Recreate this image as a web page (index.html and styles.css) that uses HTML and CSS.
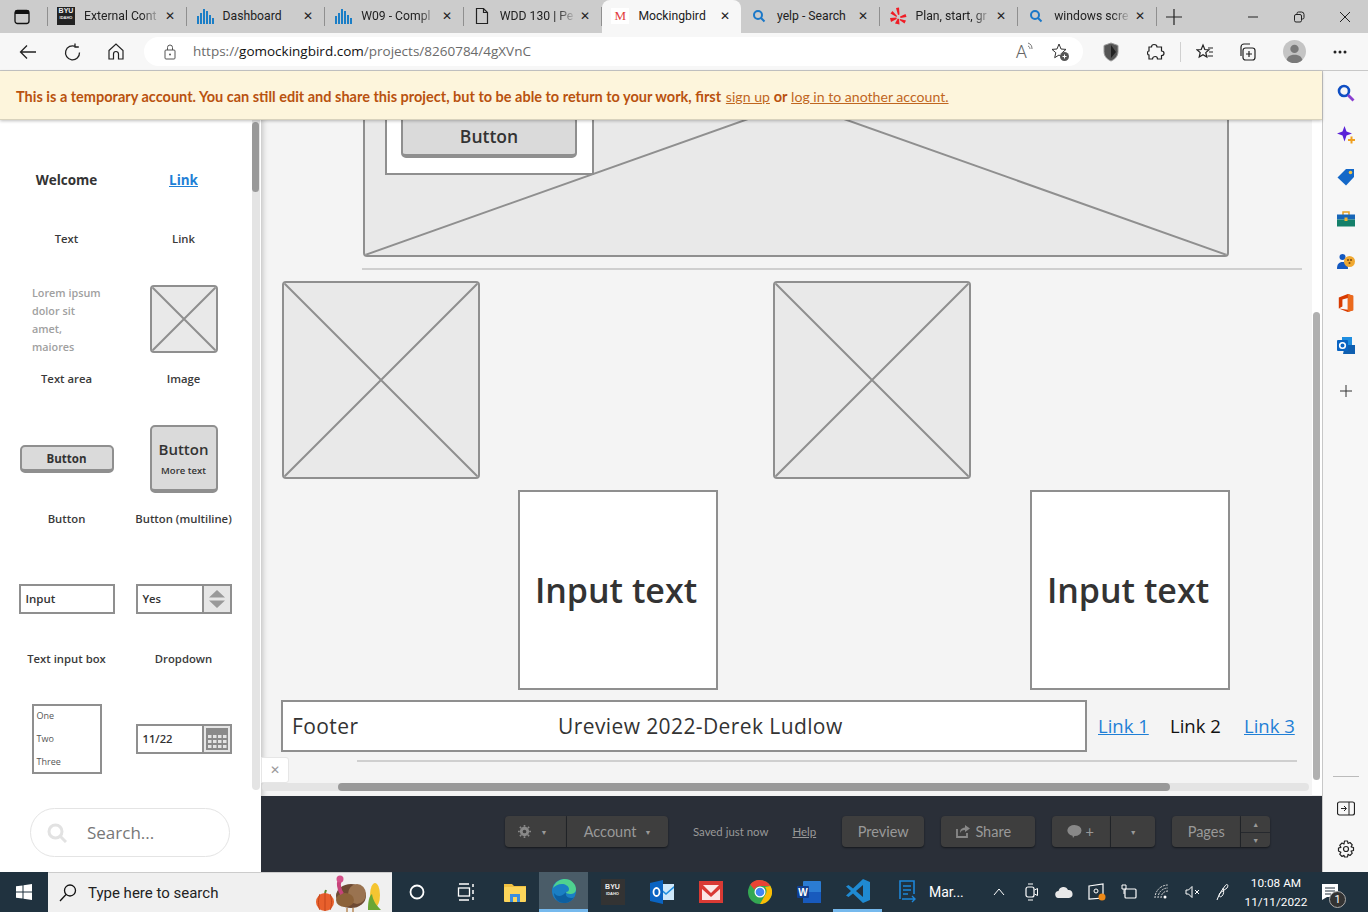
FILE: index.html
```html
<!DOCTYPE html>
<html lang="en">
<head>
    <meta charset="UTF-8">
    <title>Mockingbird</title>
    <link rel="stylesheet" href="styles.css">
</head>
<body>
    <!-- browser tabs -->
    <div class="tabstrip">
        <div class="tab-menu">
            <svg width="16" height="16" viewBox="0 0 16 16"><rect x="1" y="1.500" width="14" height="13" rx="2.500" fill="none" stroke="#111" stroke-width="1.300"/><rect x="1" y="1.500" width="14" height="3.500" fill="#111"/></svg>
        </div>
        <div class="tab">
            <div class="byu"><span>BYU</span><small>IDAHO</small></div>
            <span class="tab-title">External Cont</span><span class="tab-x">✕</span>
        </div>
        <div class="tab">
            <svg class="fav" width="18" height="18" viewBox="0 0 18 18" fill="#1b7ec6"><rect x="1" y="9" width="2" height="8"/><rect x="4" y="6" width="2" height="11"/><rect x="7" y="2" width="2" height="15"/><rect x="10" y="4" width="2" height="13"/><rect x="13" y="8" width="2" height="9"/><rect x="16" y="11" width="2" height="6"/></svg>
            <span class="tab-title tab-plain">Dashboard</span><span class="tab-x">✕</span>
        </div>
        <div class="tab">
            <svg class="fav" width="18" height="18" viewBox="0 0 18 18" fill="#1b7ec6"><rect x="1" y="9" width="2" height="8"/><rect x="4" y="6" width="2" height="11"/><rect x="7" y="2" width="2" height="15"/><rect x="10" y="4" width="2" height="13"/><rect x="13" y="8" width="2" height="9"/><rect x="16" y="11" width="2" height="6"/></svg>
            <span class="tab-title">W09 - Compl</span><span class="tab-x">✕</span>
        </div>
        <div class="tab">
            <svg class="fav" width="18" height="18" viewBox="0 0 18 18"><path d="M3.500 1.500h7l4 4v11h-11z M10.500 1.500v4h4" fill="none" stroke="#222" stroke-width="1.200"/></svg>
            <span class="tab-title">WDD 130 | Pe</span><span class="tab-x">✕</span>
        </div>
        <div class="tab active">
            <span class="fav fav-m">M</span>
            <span class="tab-title tab-plain">Mockingbird</span><span class="tab-x">✕</span>
        </div>
        <div class="tab">
            <svg class="fav" width="18" height="18" viewBox="0 0 18 18"><circle cx="8" cy="8" r="4" fill="none" stroke="#1b78c8" stroke-width="2"/><path d="M11 11l3.500 3.500" stroke="#1b78c8" stroke-width="2"/></svg>
            <span class="tab-title tab-plain">yelp - Search</span><span class="tab-x">✕</span>
        </div>
        <div class="tab">
            <svg class="fav" width="18" height="18" viewBox="0 0 18 18" fill="#f01c25"><path d="M7 1l3-.5.500 7-1.500.5z"/><path d="M1.500 6.500l2-2.500 4.500 5-.5 1z"/><path d="M1 11l6.500-.5.200 1.500-5.700 3z"/><path d="M6 16.500l2.800-5 1.200.5.500 5.500z"/><path d="M11 9.500l5.500-2.500 1 3-6 1z"/><path d="M11 12l6 1.500-1.500 3-5-3.500z"/></svg>
            <span class="tab-title">Plan, start, gr</span><span class="tab-x">✕</span>
        </div>
        <div class="tab">
            <svg class="fav" width="18" height="18" viewBox="0 0 18 18"><circle cx="8" cy="8" r="4" fill="none" stroke="#1b78c8" stroke-width="2"/><path d="M11 11l3.500 3.500" stroke="#1b78c8" stroke-width="2"/></svg>
            <span class="tab-title">windows scre</span><span class="tab-x">✕</span>
        </div>
        <div class="tab-add">
            <svg width="16" height="16" viewBox="0 0 16 16"><path d="M8 0v16M0 8h16" stroke="#222" stroke-width="1.200"/></svg>
        </div>
        <div class="win-controls">
            <svg width="12" height="12" viewBox="0 0 12 12"><path d="M1 6h10" stroke="#222"/></svg>
            <svg width="12" height="12" viewBox="0 0 12 12"><rect x="1.500" y="3.500" width="7" height="7.500" rx="1.500" fill="none" stroke="#222"/><path d="M4 3.500V2.500a1.500 1.500 0 0 1 1.500-1.500h3a2.500 2.500 0 0 1 2.500 2.500v3a1.500 1.500 0 0 1-1.500 1.500h-1" fill="none" stroke="#222"/></svg>
            <svg width="12" height="12" viewBox="0 0 12 12"><path d="M1 1l10 10M11 1L1 11" stroke="#222"/></svg>
        </div>
    </div>

    <!-- address bar -->
    <div class="toolbar">
        <div class="nav-btn"><svg width="18" height="16" viewBox="0 0 18 16"><path d="M17 8H1.500M8 1.500L1.500 8 8 14.500" fill="none" stroke="#222" stroke-width="1.300"/></svg></div>
        <div class="nav-btn"><svg width="17" height="18" viewBox="0 0 17 18"><path d="M11.500 3.500A7 7 0 1 0 15.500 9.500M11 .5v3.500h3.800" fill="none" stroke="#222" stroke-width="1.300"/></svg></div>
        <div class="nav-btn"><svg width="16" height="17" viewBox="0 0 16 17"><path d="M1 7.500L8 1l7 6.500v8.500h-4.500v-5a2.500 2.500 0 0 0-5 0v5H1z" fill="none" stroke="#222" stroke-width="1.200"/></svg></div>
        <div class="urlbar">
            <svg class="lock" width="12" height="16" viewBox="0 0 12 16"><rect x="1" y="6" width="10" height="9" rx="1" fill="none" stroke="#555"/><path d="M3.500 6V3.500a2.500 2.500 0 0 1 5 0V6" fill="none" stroke="#555"/><circle cx="6" cy="10.500" r="1" fill="#555"/></svg>
            <span class="url"><span class="url-dim">https://</span>gomockingbird.com<span class="url-dim">/projects/8260784/4gXVnC</span></span>
            <span class="read-a">A<svg width="7" height="10" viewBox="0 0 7 10"><path d="M1 1c3 1 4 3 4 6M1 4c1.500.5 2 2 2 3" fill="none" stroke="#777"/></svg></span>
            <svg width="20" height="20" viewBox="0 0 20 20"><path d="M9 2l2 5 5 .4-3.800 3.300 1.100 5L9 13l-4.300 2.700 1.100-5L2 7.400 7 7z" fill="none" stroke="#333"/><circle cx="14.500" cy="14.500" r="4.500" fill="#555"/><path d="M14.500 12.500v4M12.500 14.500h4" stroke="#fff"/></svg>
        </div>
        <div class="tool-icons">
            <svg width="16" height="20" viewBox="0 0 16 20"><path d="M8 1l7 2.500v6c0 5-3.500 8-7 9.500-3.500-1.500-7-4.500-7-9.500v-6z" fill="#555" stroke="#999"/><path d="M8 3l5 7-5 6z" fill="#222"/></svg>
            <svg width="18" height="18" viewBox="0 0 18 18"><path d="M7 1.500c1.500 0 3 1 3 2.500h4.500v4c1.500 0 2.500 1 2.500 2.200s-1 2.300-2.500 2.300v3.500h-4c0-1.500-1-2.500-2.300-2.500S5.500 14.500 5.500 16H2v-4c-1 0-1.500-1-1.500-2S1 8 2 8V4h2.500c0-1.500 1-2.500 2.500-2.500z" fill="none" stroke="#222" stroke-width="1.200"/></svg>
            <span class="tool-sep"></span>
            <svg width="18" height="18" viewBox="0 0 18 18"><path d="M7 2l1.800 4.500 4.200.3-3.200 2.800 1 4.400L7 11.700 3.200 14l1-4.400L1 6.800l4.200-.3z" fill="none" stroke="#222" stroke-width="1.200"/><path d="M12 5h5M13 9h4M11.500 13h5.500" stroke="#222" stroke-width="1.200"/></svg>
            <svg width="18" height="18" viewBox="0 0 18 18"><rect x="5" y="5" width="12" height="12" rx="2.500" fill="none" stroke="#222" stroke-width="1.200"/><path d="M3 13V4a3 3 0 0 1 3-3h6M11 8v6M8 11h6" fill="none" stroke="#222" stroke-width="1.200"/></svg>
            <div class="avatar"><svg width="23" height="23" viewBox="0 0 22 22"><circle cx="11" cy="8.500" r="4" fill="#7a7a7a"/><path d="M3 22c0-6 3.500-8 8-8s8 2 8 8z" fill="#7a7a7a"/></svg></div>
            <svg class="dots" width="14" height="4" viewBox="0 0 14 4" fill="#222"><circle cx="2" cy="2" r="1.500"/><circle cx="7" cy="2" r="1.500"/><circle cx="12" cy="2" r="1.500"/></svg>
        </div>
    </div>

    <div class="main">
        <div class="app">
            <div class="banner">
                <strong>This is a temporary account. You can still edit and share this project, but to be able to return to your work, first</strong>
                <a class="banner-signup" href="#">sign up</a> <strong>or</strong> <a href="#">log in to another account.</a>
            </div>
            <div class="workspace">
                <!-- component palette -->
                <div class="palette">
                    <div class="palette-list">
                        <div class="cell">
                            <div class="preview"><span class="p-welcome">Welcome</span></div>
                            <div class="cell-label">Text</div>
                        </div>
                        <div class="cell">
                            <div class="preview"><a class="p-link" href="#">Link</a></div>
                            <div class="cell-label">Link</div>
                        </div>
                        <div class="cell">
                            <div class="preview"><div class="p-lorem">Lorem ipsum dolor sit amet, maiores</div></div>
                            <div class="cell-label">Text area</div>
                        </div>
                        <div class="cell">
                            <div class="preview">
                                <div class="ph p-image"><svg viewBox="0 0 100 100" preserveAspectRatio="none"><path d="M0 0L100 100M100 0L0 100"/></svg></div>
                            </div>
                            <div class="cell-label">Image</div>
                        </div>
                        <div class="cell">
                            <div class="preview"><div class="wf-btn p-btn">Button</div></div>
                            <div class="cell-label">Button</div>
                        </div>
                        <div class="cell">
                            <div class="preview"><div class="wf-btn p-multi"><b>Button</b><small>More text</small></div></div>
                            <div class="cell-label">Button (multiline)</div>
                        </div>
                        <div class="cell">
                            <div class="preview"><div class="p-input">Input</div></div>
                            <div class="cell-label">Text input box</div>
                        </div>
                        <div class="cell">
                            <div class="preview">
                                <div class="p-combo"><span class="combo-val">Yes</span><span class="combo-btn"><svg width="16" height="18" viewBox="0 0 16 18" fill="#999"><path d="M8 0l8 7.500H0zM0 10.500h16L8 18z"/></svg></span></div>
                            </div>
                            <div class="cell-label">Dropdown</div>
                        </div>
                        <div class="cell">
                            <div class="preview"><div class="p-list"><span>One</span><span>Two</span><span>Three</span></div></div>
                        </div>
                        <div class="cell">
                            <div class="preview">
                                <div class="p-combo"><span class="combo-val">11/22</span><span class="combo-btn"><svg width="22" height="22" viewBox="0 0 22 22"><rect width="22" height="22" fill="#8a8a8a"/><g fill="#e4e4e4"><rect x="2" y="7" width="3.500" height="3"/><rect x="7" y="7" width="3.500" height="3"/><rect x="12" y="7" width="3.500" height="3"/><rect x="17" y="7" width="3.500" height="3"/><rect x="2" y="12" width="3.500" height="3"/><rect x="7" y="12" width="3.500" height="3"/><rect x="12" y="12" width="3.500" height="3"/><rect x="17" y="12" width="3.500" height="3"/><rect x="2" y="17" width="3.500" height="3"/><rect x="7" y="17" width="3.500" height="3"/><rect x="12" y="17" width="3.500" height="3"/><rect x="17" y="17" width="3.500" height="3"/></g></svg></span></div>
                            </div>
                        </div>
                    </div>
                    <div class="palette-search">
                        <svg width="20" height="20" viewBox="0 0 20 20"><circle cx="8.500" cy="8.500" r="6.500" fill="none" stroke="#e2e2e2" stroke-width="3"/><path d="M13 13l6 6" stroke="#e2e2e2" stroke-width="3"/></svg>
                        <span>Search...</span>
                    </div>
                    <div class="palette-track"><div class="palette-thumb"></div></div>
                </div>

                <div class="stage">
                    <!-- wireframe canvas, items sit where the user dropped them -->
                    <div class="canvas">
                        <div class="ph big-image"><svg viewBox="0 0 100 100" preserveAspectRatio="none"><path d="M0 0L100 100M100 0L0 100"/></svg></div>
                        <div class="inner-box"></div>
                        <div class="wf-btn big-btn">Button</div>
                        <div class="rule rule-top"></div>
                        <div class="ph square sq-left"><svg viewBox="0 0 100 100" preserveAspectRatio="none"><path d="M0 0L100 100M100 0L0 100"/></svg></div>
                        <div class="ph square sq-right"><svg viewBox="0 0 100 100" preserveAspectRatio="none"><path d="M0 0L100 100M100 0L0 100"/></svg></div>
                        <div class="input-box ib-left">Input text</div>
                        <div class="input-box ib-right">Input text</div>
                        <div class="footer-box"><span class="footer-left">Footer</span><span class="footer-mid">Ureview 2022-Derek Ludlow</span></div>
                        <a class="wf-link link-1" href="#">Link 1</a>
                        <span class="wf-link link-2">Link 2</span>
                        <a class="wf-link link-3" href="#">Link 3</a>
                        <div class="rule rule-bottom"></div>
                        <div class="canvas-close">✕</div>
                        <div class="hscroll"><div class="hscroll-thumb"></div></div>
                    </div>
                    <div class="vscroll"><div class="vscroll-thumb"></div></div>
                </div>

                <div class="bottom-bar">
                    <div class="btn-group">
                        <span class="bb-btn bb-gear">
                            <svg width="13" height="13" viewBox="0 0 14 14"><circle cx="7" cy="7" r="3.500" fill="none" stroke="#888" stroke-width="3"/><path d="M7 0v14M0 7h14M2 2l10 10M12 2L2 12" stroke="#888" stroke-width="1.800" stroke-dasharray="2 10 2 0"/></svg>
                            <i class="caret">▼</i>
                        </span>
                        <span class="bb-btn bb-account">Account <i class="caret">▼</i></span>
                    </div>
                    <span class="saved">Saved just now</span>
                    <a class="help" href="#">Help</a>
                    <span class="bb-btn bb-solo bb-preview">Preview</span>
                    <span class="bb-btn bb-solo bb-share">
                        <svg width="14" height="13" viewBox="0 0 14 13"><path d="M1 4v8h10V8" fill="none" stroke="#888" stroke-width="1.800"/><path d="M9 0l5 3.500L9 7V5C6 5 5 6 4 8c0-3 1-5 5-5.500z" fill="#888"/></svg>
                        Share
                    </span>
                    <div class="btn-group">
                        <span class="bb-btn bb-comment">
                            <svg width="15" height="14" viewBox="0 0 15 14"><path d="M7.500 0a7 5.500 0 0 1 0 11L6 13l-.5-2.200A7 5.500 0 0 1 7.500 0z" fill="#888"/></svg>
                            +
                        </span>
                        <span class="bb-btn bb-more"><i class="caret">▼</i></span>
                    </div>
                    <div class="btn-group">
                        <span class="bb-btn bb-pages">Pages</span>
                        <span class="bb-btn bb-arrows"><i class="caret arrow-up">▲</i><i class="caret arrow-down">▼</i></span>
                    </div>
                </div>
            </div>
        </div>

        <!-- edge sidebar -->
        <div class="sidebar">
            <svg width="18" height="18" viewBox="0 0 18 18"><circle cx="7" cy="7" r="5" fill="none" stroke="#0f4fc4" stroke-width="2.600"/><path d="M11 11l5.500 5.500" stroke="#8a3fd0" stroke-width="2.800"/></svg>
            <svg width="18" height="18" viewBox="0 0 18 18"><path d="M7.500 0l2 5.500 5.500 2-5.500 2-2 6-2-6L0 7.500l5.500-2z" fill="#5a22d8"/><path d="M14.500 10.500v7M11 14h7" stroke="#f0a020" stroke-width="2"/></svg>
            <svg width="18" height="18" viewBox="0 0 18 18"><path d="M9 1h8v8l-8 8.500L.5 9.500z" fill="#1468c8"/><circle cx="13.500" cy="4.500" r="1.800" fill="#f5c242"/></svg>
            <svg width="18" height="16" viewBox="0 0 18 16"><path d="M6 4V1h6v3" fill="none" stroke="#e8a020" stroke-width="1.500"/><rect y="3.500" width="18" height="5" fill="#1766b8"/><rect y="8.500" width="18" height="7" fill="#14806a"/><rect x="7.500" y="6.500" width="3" height="3.500" fill="#f2b632"/></svg>
            <svg width="18" height="18" viewBox="0 0 18 18"><circle cx="5.500" cy="5" r="3" fill="#1458c0"/><path d="M0 17c0-5 2-7 5.500-7s5.500 2 5.500 7z" fill="#1458c0"/><circle cx="12.500" cy="9.500" r="5.500" fill="#f0a830"/><circle cx="11" cy="8" r="1" fill="#7a4a10"/><circle cx="14" cy="8" r="1" fill="#7a4a10"/><circle cx="12.500" cy="11" r="1" fill="#7a4a10"/></svg>
            <svg width="16" height="20" viewBox="0 0 16 20"><path d="M0 4l10-4 6 2v16l-6 2-10-4 10 1.500V4.500L4 6v8l-4 2z" fill="#d83b01"/><path d="M10 0l6 2v16l-6 2z" fill="#eb6a1c"/></svg>
            <svg width="18" height="18" viewBox="0 0 18 18"><rect x="5" y="1" width="10" height="8" fill="#1f8ee0"/><path d="M8 9h10v9H6z" fill="#0f5fb0"/><rect y="4" width="11" height="11" rx="1" fill="#0a64c2"/><circle cx="5.500" cy="9.500" r="2.800" fill="none" stroke="#fff" stroke-width="1.600"/></svg>
            <svg class="side-plus" width="14" height="14" viewBox="0 0 14 14"><path d="M7 1v12M1 7h12" stroke="#333"/></svg>
            <div class="side-bottom">
                <span class="side-rule"></span>
                <svg width="18" height="15" viewBox="0 0 18 15"><rect x=".5" y="1" width="17" height="13" rx="2" fill="none" stroke="#222" stroke-width="1.200"/><path d="M12 1v13" stroke="#222"/><path d="M4 7.500h5M7 5l2.500 2.500L7 10" fill="none" stroke="#222"/></svg>
                <svg width="18" height="18" viewBox="0 0 18 18"><circle cx="9" cy="9" r="2.500" fill="none" stroke="#222" stroke-width="1.200"/><path d="M7.500 1h3l.5 2.500 2-1 2.300 2.300-1.200 2 2.400.7v3l-2.400.7 1.200 2-2.300 2.300-2-1.100-.5 2.600h-3L7 15.400l-2 1.100-2.300-2.300 1.200-2L1.500 11V8l2.400-.7-1.200-2L5 3l2 1z" fill="none" stroke="#222" stroke-width="1.200" stroke-linejoin="round"/></svg>
            </div>
        </div>
    </div>

    <!-- windows taskbar -->
    <div class="taskbar">
        <div class="start"><svg width="16" height="16" viewBox="0 0 16 16" fill="#fff"><path d="M0 2.300L6.500 1.400V7.500H0zM7.500 1.200L16 0V7.500H7.500zM0 8.500h6.500v6.100L0 13.700zM7.500 8.500H16V16l-8.500-1.200z"/></svg></div>
        <div class="task-search">
            <svg width="18" height="18" viewBox="0 0 18 18"><circle cx="11" cy="6.500" r="5.500" fill="none" stroke="#111" stroke-width="1.300"/><path d="M7 10.500L1 17" stroke="#111" stroke-width="1.300"/></svg>
            <span class="task-search-text">Type here to search</span>
            <svg class="doodle" width="74" height="38" viewBox="0 0 68 38">
                <ellipse cx="10" cy="28" rx="9" ry="9" fill="#e8602c"/><path d="M10 19v18M5 20c-2 5-2 12 0 16M15 20c2 5 2 12 0 16" stroke="#c4451a" fill="none"/><path d="M10 19l1-3" stroke="#5c8a30" stroke-width="2"/>
                <ellipse cx="36" cy="22" rx="15" ry="12" fill="#6e4a33"/><ellipse cx="42" cy="20" rx="9" ry="10" fill="#9a7350"/><ellipse cx="30" cy="26" rx="9" ry="7" fill="#8c6239"/><path d="M27 20c-3-5-4-10-2-14" stroke="#c7447a" stroke-width="4" fill="none"/><circle cx="25" cy="5" r="3.500" fill="#d4508a"/><path d="M32 34v4M38 34v4" stroke="#b98a5a" stroke-width="1.500"/>
                <ellipse cx="60" cy="21" rx="5" ry="12" fill="#f5c531"/><path d="M53 36c0-8 1-14 4-16 1 6 3 10 9 16z" fill="#6aa634"/>
            </svg>
        </div>
        <div class="task-icons">
            <div class="task-app"><svg width="16" height="16" viewBox="0 0 16 16"><circle cx="8" cy="8" r="6.500" fill="none" stroke="#fff" stroke-width="1.800"/></svg></div>
            <div class="task-app"><svg width="18" height="18" viewBox="0 0 18 18"><path d="M2 1h10M2 17h10" stroke="#fff" stroke-width="1.500"/><rect x="1.500" y="5" width="11" height="8" fill="none" stroke="#fff" stroke-width="1.300"/><path d="M16 1v3M16 7v4M16 14v3" stroke="#fff" stroke-width="1.500"/></svg></div>
            <div class="task-app"><svg width="22" height="20" viewBox="0 0 22 20"><path d="M0 2h8l2 2h12v4H0z" fill="#f0c040"/><rect y="5" width="22" height="15" rx="1" fill="#fcd55a"/><rect x="6" y="12" width="10" height="8" fill="#3b8ede"/><rect x="9" y="15" width="4" height="5" fill="#fcd55a"/></svg></div>
            <div class="task-app task-on"><svg width="24" height="24" viewBox="0 0 24 24"><circle cx="12" cy="12" r="12" fill="#1a7fc4"/><path d="M1 9C3 2 9 0 13 0c6 0 11 5 11 10 0 4-3 5-6 5-2 0-4-1-4-2 2 0 3-1 3-3 0-3-4-5-7-5-4 0-7 2-9 4z" fill="#4fd18f"/><path d="M14 13c-1 3 1 6 5 6 1 0 2 0 3-1-2 4-6 6-10 6-6 0-10-5-10-10 3 4 8 4 12-1z" fill="#0d5fa0"/></svg></div>
            <div class="task-app"><div class="byu byu-task"><span>BYU</span><small>IDAHO</small></div></div>
            <div class="task-app"><svg width="24" height="24" viewBox="0 0 24 24"><rect x="8" y="4" width="16" height="16" fill="#cfe8fa"/><path d="M8 6l8 7 8-7v2l-8 7-8-7z" fill="#1f8ee0"/><path d="M0 3l13-3v24L0 21z" fill="#0a64c2"/><ellipse cx="6.500" cy="12" rx="3" ry="4" fill="none" stroke="#fff" stroke-width="1.800"/></svg></div>
            <div class="task-app"><svg width="24" height="22" viewBox="0 0 24 22"><rect width="24" height="22" fill="#d93a34"/><path d="M3 4h18v15H3z" fill="#fbe8e6"/><path d="M3 3l9 9 9-9v5l-9 8-9-8z" fill="#d93a34"/></svg></div>
            <div class="task-app"><svg width="24" height="24" viewBox="0 0 24 24"><circle cx="12" cy="12" r="12" fill="#34a853"/><path d="M12 0a12 12 0 0 1 10.400 6H12a6 6 0 0 0-5.600 3.800L2.200 4.500A12 12 0 0 1 12 0z" fill="#ea4335"/><path d="M22.400 6A12 12 0 0 1 12 24l5-8.800A6 6 0 0 0 17 7z" fill="#fbbc05"/><circle cx="12" cy="12" r="5.500" fill="#fff"/><circle cx="12" cy="12" r="4.300" fill="#4285f4"/></svg></div>
            <div class="task-app"><svg width="24" height="22" viewBox="0 0 24 22"><rect x="6" width="18" height="22" rx="1" fill="#2b7cd3"/><rect x="6" y="11" width="18" height="11" fill="#185abd"/><rect y="5" width="12" height="12" rx="1" fill="#103f91"/><text x="6" y="14.500" class="word-w">W</text></svg></div>
            <div class="task-app task-line"><svg width="24" height="24" viewBox="0 0 24 24"><path d="M17 0l7 3v18l-7 3L7 14.500 2.500 18 0 16.500 5 12 0 7.500 2.500 6 7 9.500z" fill="#1f8ad2"/><path d="M17 6v12l-7-6z" fill="#22303c"/></svg></div>
            <div class="task-app task-wide">
                <svg width="18" height="24" viewBox="0 0 18 24"><path d="M1 19V1h14v13M4 6h8M4 10h8M4 14h5" fill="none" stroke="#1d86d8" stroke-width="1.600"/><path d="M3 19h13M13 16l3 3-3 3" fill="none" stroke="#1d86d8" stroke-width="1.400"/></svg>
                <span>Mar...</span>
            </div>
        </div>
        <div class="tray">
            <span class="tray-item"><svg width="12" height="8" viewBox="0 0 12 8"><path d="M1 7l5-6 5 6" fill="none" stroke="#fff"/></svg></span>
            <span class="tray-item"><svg width="14" height="20" viewBox="0 0 14 20"><rect x="1" y="5" width="8" height="10" rx="2" fill="none" stroke="#fff" stroke-width="1.200"/><path d="M9.500 8l3-1.500v7l-3-1.500M3 2h5M3 18h5" fill="none" stroke="#fff"/></svg></span>
            <span class="tray-item"><svg width="18" height="12" viewBox="0 0 18 12"><path d="M4 12a3.500 3.500 0 0 1-.5-7A5 5 0 0 1 13 4a4 4 0 0 1 1 8z" fill="#e8e8e8"/></svg></span>
            <span class="tray-item"><svg width="18" height="18" viewBox="0 0 18 18"><path d="M1 3l14-2v14l-14 1z" fill="none" stroke="#fff" stroke-width="1.200"/><circle cx="8" cy="8" r="2" fill="none" stroke="#fff"/><circle cx="14" cy="14" r="3.500" fill="#ef8a17"/></svg></span>
            <span class="tray-item"><svg width="16" height="16" viewBox="0 0 16 16"><rect x="4" y="5" width="11" height="9" rx="1" fill="none" stroke="#fff" stroke-width="1.200"/><path d="M1 1h4v4H1zM3 5v5" fill="none" stroke="#fff"/></svg></span>
            <span class="tray-item"><svg width="16" height="16" viewBox="0 0 16 16"><path d="M1 14a13 13 0 0 1 13-13M4 14a10 10 0 0 1 10-10M7 14a7 7 0 0 1 7-7" fill="none" stroke="#ddd" stroke-dasharray="2 1"/><circle cx="11" cy="13" r="1.500" fill="#fff"/></svg></span>
            <span class="tray-item tray-vol"><svg width="15" height="14" viewBox="0 0 15 14"><path d="M1 5h2.500L7 1.500v11L3.500 9H1zM10 5l4 4M14 5l-4 4" fill="none" stroke="#fff"/></svg></span>
            <span class="tray-item tray-pen"><svg width="16" height="20" viewBox="0 0 16 20"><path d="M2 18c2-6 5-10 8-14 2-3 4-1 2 2-2 2-5 3-7 5-2 3 0 5 2 3s2-5 1-8" fill="none" stroke="#fff"/></svg></span>
            <div class="clock"><span>10:08 AM</span><span>11/11/2022</span></div>
            <div class="notify">
                <svg width="18" height="18" viewBox="0 0 18 18"><path d="M1 1h16v13H6l-5 3z" fill="#fff"/><path d="M4 5h10M4 8h10M4 11h6" stroke="#22303c"/></svg>
                <span class="notify-badge">1</span>
            </div>
        </div>
    </div>
</body>
</html>
```

FILE: styles.css
```css
* {
    box-sizing: border-box;
}
html, body {
    margin: 0;
    height: 100%;
}
body {
    width: 1368px;
    height: 912px;
    overflow: hidden;
    display: flex;
    flex-direction: column;
    font-family: "Open Sans", "Noto Sans", sans-serif;
    color: #333;
}

/* browser chrome */
.tabstrip {
    height: 33px;
    flex-shrink: 0;
    display: flex;
    align-items: stretch;
    background: #cccccc;
    font-family: Roboto, sans-serif;
    font-size: 12.200px;
    color: #222;
}
.tab-menu {
    width: 48px;
    display: flex;
    align-items: center;
    justify-content: center;
    padding-right: 3px;
    border-right: 1px solid #8f8f8f;
    margin: 7px 0;
}
.tab {
    width: 138.600px;
    display: flex;
    align-items: center;
    padding: 0 9px 1px 9px;
    position: relative;
    border-right: 1px solid #8f8f8f;
    margin: 7px 0;
}
.tab.active {
    background: #f7f7f7;
    border-right: none;
    border-radius: 8px 8px 0 0;
    margin: 0;
    height: 33px;
}
.fav {
    flex-shrink: 0;
    margin-right: 9px;
}
.fav-m {
    width: 18px;
    text-align: center;
    font-family: "Liberation Serif", serif;
    font-size: 13px;
    color: #e23b3b;
    background: #fff;
}
.tab-title {
    flex: 1;
    white-space: nowrap;
    -webkit-mask-image: linear-gradient(to right, #000 75%, transparent 100%);
    mask-image: linear-gradient(to right, #000 75%, transparent 100%);
}
.tab-plain {
    -webkit-mask-image: none;
    mask-image: none;
}
.tab-x {
    font-size: 11.500px;
    width: 14px;
    margin-left: 2px;
    text-align: center;
}
.byu {
    width: 18px;
    height: 18px;
    flex-shrink: 0;
    margin-right: 9px;
    background: #222;
    color: #eee;
    display: flex;
    flex-direction: column;
    align-items: center;
    font-family: "Liberation Sans", sans-serif;
    font-weight: bold;
    font-size: 7px;
    line-height: 8px;
}
.byu small {
    font-size: 4px;
    line-height: 6px;
}
.byu-task {
    width: 24px;
    height: 26px;
    margin: 0;
    padding-top: 4px;
    background: #333;
}
.tab-add {
    width: 34px;
    display: flex;
    align-items: center;
    justify-content: center;
}
.win-controls {
    margin-left: auto;
    width: 138px;
    display: flex;
    align-items: center;
    justify-content: space-between;
    padding: 0 17px;
}

.toolbar {
    height: 38px;
    flex-shrink: 0;
    display: flex;
    align-items: center;
    background: #f7f7f7;
    padding-left: 6px;
    border-bottom: 1px solid #c8c8c8;
}
.nav-btn {
    width: 44px;
    display: flex;
    justify-content: center;
}
.urlbar {
    width: 939px;
    height: 29px;
    margin-left: 6px;
    background: #fff;
    border-radius: 15px;
    display: flex;
    align-items: center;
    padding: 0 13px 0 20px;
}
.lock {
    margin-right: 17px;
}
.url {
    flex: 1;
    padding-bottom: 2px;
    font-size: 13.500px;
    color: #111;
}
.url-dim {
    color: #6b6b6b;
}
.read-a {
    display: flex;
    align-items: flex-start;
    font-family: Roboto, sans-serif;
    font-weight: 300;
    font-size: 18px;
    line-height: 20px;
    color: #666;
    margin-right: 16px;
}
.tool-icons {
    flex: 1;
    display: flex;
    align-items: center;
    padding-left: 20px;
}
.tool-icons > svg:nth-child(1) {
    margin-right: 28px;
}
.tool-icons > svg:nth-child(2) {
    margin-right: 15px;
}
.tool-icons > svg:nth-child(4) {
    margin: 0 24px 0 15px;
}
.tool-sep {
    width: 1px;
    height: 20px;
    background: #d0d0d0;
}
.avatar {
    width: 23px;
    height: 23px;
    border-radius: 50%;
    overflow: hidden;
    background: #c4c4c4;
    margin-left: 27px;
}
.dots {
    margin-left: 27px;
}

/* page area */
.main {
    flex: 1;
    min-height: 0;
    display: flex;
}
.app {
    width: 1322px;
    display: flex;
    flex-direction: column;
}
.banner {
    height: 49px;
    flex-shrink: 0;
    padding-top: 17px;
    background: #fdf5dc;
    border-bottom: 1px solid #d8d2bd;
    box-shadow: 0 1px 3px rgba(0, 0, 0, 0.25);
    padding-left: 16px;
    font-family: Lato, sans-serif;
    font-size: 14.500px;
    color: #b9520f;
    white-space: nowrap;
    position: relative;
    z-index: 2;
}
.banner a {
    color: #c0661f;
    font-size: 14.100px;
}
.banner-signup {
    margin-left: 1px;
}
.workspace {
    flex: 1;
    min-height: 0;
    display: grid;
    grid-template-columns: 261px 1fr;
    grid-template-rows: 676px 76px;
}

/* palette */
.palette {
    grid-row: 1 / 3;
    position: relative;
    background: #fff;
    padding-top: 19px;
    overflow: hidden;
}
.palette-list {
    width: 234px;
    margin-left: 8px;
    display: grid;
    grid-template-columns: 117px 117px;
    grid-auto-rows: 140px;
    height: 640px;
    overflow: hidden;
}
.cell {
    display: flex;
    flex-direction: column;
    align-items: center;
}
.preview {
    height: 80px;
    width: 100%;
    display: flex;
    align-items: center;
    justify-content: center;
}
.cell-label {
    margin-top: 10px;
    line-height: 20px;
    font-size: 11.300px;
    font-weight: 600;
    color: #3a3a3a;
    white-space: nowrap;
}
.p-welcome,
.p-link {
    font-size: 13.500px;
    font-weight: 700;
    margin-top: 2px;
}
.p-link {
    color: #1f7fd6;
}
.p-lorem {
    width: 73px;
    margin: 1px 0 0 4px;
    font-size: 10.800px;
    font-weight: 600;
    line-height: 18px;
    color: #a0a0a0;
}
.ph {
    background: #e9e9e9;
    border: 2px solid #8f8f8f;
    border-radius: 4px;
    overflow: hidden;
}
.ph svg {
    display: block;
    width: 100%;
    height: 100%;
}
.ph path {
    stroke: #8f8f8f;
    stroke-width: 2;
    vector-effect: non-scaling-stroke;
}
.p-image {
    width: 68px;
    height: 68px;
}
.wf-btn {
    background: #dadada;
    border: 2px solid #8f8f8f;
    border-bottom-width: 4px;
    border-radius: 5px;
    color: #333;
    font-weight: 700;
    display: flex;
    align-items: center;
    justify-content: center;
}
.p-btn {
    width: 94px;
    height: 28px;
    font-size: 11.500px;
}
.p-multi {
    width: 68px;
    height: 68px;
    flex-direction: column;
}
.p-multi b {
    font-size: 15px;
    font-weight: 600;
}
.p-multi small {
    font-size: 9.500px;
    font-weight: 600;
    margin-top: 5px;
}
.p-input {
    width: 96px;
    height: 30px;
    border: 2px solid #8f8f8f;
    padding-left: 5px;
    font-size: 11.500px;
    font-weight: 600;
    line-height: 26px;
}
.p-combo {
    width: 96px;
    height: 30px;
    border: 2px solid #8f8f8f;
    display: flex;
}
.combo-val {
    flex: 1;
    padding-left: 5px;
    font-size: 11.200px;
    font-weight: 600;
    line-height: 26px;
}
.combo-btn {
    width: 28px;
    background: #e6e6e6;
    border-left: 2px solid #8f8f8f;
    display: flex;
    align-items: center;
    justify-content: center;
}
.p-list {
    width: 70px;
    height: 70px;
    border: 2px solid #8f8f8f;
    padding: 3px 0 4px 3px;
    display: flex;
    flex-direction: column;
    justify-content: space-between;
    font-size: 9px;
    color: #555;
}
.palette-search {
    width: 200px;
    height: 49px;
    margin: 29px 0 0 30px;
    border: 1px solid #e4e4e4;
    border-radius: 25px;
    display: flex;
    align-items: center;
    padding-left: 16px;
    font-size: 17px;
    color: #777;
}
.palette-search span {
    margin-left: 20px;
}
.palette-track {
    position: absolute;
    top: 0;
    right: 1px;
    width: 8px;
    height: 670px;
    background: #e4e4e4;
    border-radius: 0 0 4px 4px;
}
.palette-thumb {
    width: 7px;
    height: 70px;
    margin-top: 2px;
    background: #999;
    border-radius: 4px;
}

/* wireframe stage */
.stage {
    display: flex;
    min-width: 0;
    overflow: hidden;
}
.canvas {
    position: relative;
    width: 1051px;
    background: #f4f4f4;
    box-shadow: inset 6px 0 6px -5px rgba(0, 0, 0, 0.25);
    overflow: hidden;
}
.big-image {
    position: absolute;
    left: 102px;
    top: -173px;
    width: 866px;
    height: 310px;
}
.inner-box {
    position: absolute;
    left: 124px;
    top: -10px;
    width: 209px;
    height: 65px;
    background: #fff;
    border: 2px solid #8f8f8f;
}
.big-btn {
    position: absolute;
    left: 140px;
    top: -4px;
    width: 176px;
    height: 42px;
    font-size: 17.500px;
    font-weight: 600;
}
.rule {
    position: absolute;
    height: 2px;
    background: #cfcfcf;
}
.rule-top {
    left: 101px;
    top: 148px;
    width: 940px;
}
.rule-bottom {
    left: 96px;
    top: 640px;
    width: 940px;
}
.square {
    position: absolute;
    top: 161px;
    width: 198px;
    height: 198px;
}
.sq-left {
    left: 21px;
}
.sq-right {
    left: 512px;
}
.input-box {
    position: absolute;
    top: 370px;
    width: 200px;
    height: 200px;
    background: #fff;
    border: 2px solid #8f8f8f;
    display: flex;
    align-items: center;
    justify-content: center;
    padding: 0 4px 1px 0;
    font-size: 34px;
    font-weight: 600;
    color: #333;
}
.ib-left {
    left: 257px;
}
.ib-right {
    left: 769px;
}
.footer-box {
    position: absolute;
    left: 20px;
    top: 580px;
    width: 806px;
    height: 52px;
    background: #fff;
    border: 2px solid #8f8f8f;
    font-size: 21px;
    font-weight: 500;
    line-height: 48px;
    letter-spacing: 0.4px;
    color: #333;
}
.footer-left {
    position: absolute;
    left: 9px;
}
.footer-mid {
    position: absolute;
    left: 275px;
    white-space: nowrap;
}
.wf-link {
    position: absolute;
    top: 592px;
    font-size: 18.500px;
    font-weight: 500;
    line-height: 28px;
    color: #1f7fd6;
}
.link-1 {
    left: 837px;
}
.link-2 {
    left: 909px;
    color: #111;
}
.link-3 {
    left: 983px;
}
.canvas-close {
    position: absolute;
    left: 0;
    top: 637px;
    width: 28px;
    height: 26px;
    background: #fff;
    border: 1px solid #e6e6e6;
    border-radius: 0 3px 3px 0;
    font-size: 12px;
    line-height: 24px;
    text-align: center;
    color: #999;
}
.hscroll {
    position: absolute;
    left: 1px;
    top: 663px;
    width: 1047px;
    height: 8px;
    background: #e4e4e4;
    border-radius: 4px;
}
.hscroll-thumb {
    position: absolute;
    left: 76px;
    width: 832px;
    height: 8px;
    background: #999;
    border-radius: 4px;
}
.vscroll {
    position: relative;
    flex: 1;
    background: #fff;
    border-bottom: 1px solid #eee;
}
.vscroll-thumb {
    position: absolute;
    left: 1px;
    top: 192px;
    width: 7px;
    height: 468px;
    background: #b0b0b0;
    border-radius: 4px;
}

/* dark bar under the canvas */
.bottom-bar {
    display: flex;
    align-items: center;
    padding: 0 0 5px 244px;
    background: #2a2f38;
    font-family: Lato, sans-serif;
    font-size: 14.500px;
    color: #999;
}
.btn-group {
    display: flex;
}
.bb-btn {
    height: 31px;
    display: flex;
    align-items: center;
    justify-content: center;
    gap: 6px;
    background: #3e3e3e;
    box-shadow: 0 1px 2px rgba(0, 0, 0, 0.5);
}
.btn-group .bb-btn:first-child {
    border-radius: 4px 0 0 4px;
    border-right: 1px solid #26292e;
}
.btn-group .bb-btn:last-child {
    border-radius: 0 4px 4px 0;
}
.bb-solo {
    border-radius: 4px;
}
.caret {
    font-style: normal;
    font-size: 7px;
}
.bb-gear {
    width: 62px;
    gap: 10px;
    padding-right: 6px;
}
.bb-account {
    width: 101px;
    gap: 8px;
}
.saved {
    margin-left: 25px;
    font-size: 11.400px;
}
.help {
    margin-left: 24px;
    font-size: 11.500px;
    color: #999;
}
.bb-preview {
    width: 82px;
    margin-left: 26px;
}
.bb-share {
    width: 94px;
    margin-left: 17px;
    margin-right: 17px;
    gap: 5px;
    padding-right: 9px;
}
.bb-comment {
    width: 59px;
    gap: 4px;
    padding-right: 2px;
}
.bb-more {
    width: 44px;
}
.bb-pages {
    width: 69px;
    margin-left: 17px;
}
.bb-arrows {
    width: 29px;
    flex-direction: column;
    gap: 0;
}
.arrow-up,
.arrow-down {
    width: 100%;
    height: 15px;
    line-height: 15px;
    font-size: 7px;
    text-align: center;
}
.arrow-down {
    border-top: 1px solid #26292e;
}

/* edge sidebar */
.sidebar {
    flex: 1;
    display: flex;
    flex-direction: column;
    align-items: center;
    gap: 24px;
    padding-top: 13px;
    background: #f7f7f7;
    border-left: 1px solid #c8c8c8;
}
.sidebar > svg {
    height: 18px;
}
.side-plus {
    margin-top: 4px;
}
.side-bottom {
    margin-top: auto;
    display: flex;
    flex-direction: column;
    align-items: center;
    gap: 24px;
    padding-bottom: 14px;
}
.side-rule {
    width: 26px;
    height: 1px;
    background: #bbb;
}

/* taskbar */
.taskbar {
    height: 40px;
    flex-shrink: 0;
    display: flex;
    align-items: stretch;
    background: #20323f;
    color: #fff;
    font-family: Roboto, sans-serif;
    font-size: 14px;
}
.start {
    width: 48px;
    display: flex;
    align-items: center;
    justify-content: center;
}
.task-search {
    width: 344px;
    display: flex;
    align-items: center;
    padding-left: 11px;
    background: #f0f0f0;
    border-top: 1px solid #ccc;
    color: #222;
    font-size: 15px;
    overflow: hidden;
}
.task-search-text {
    margin-left: 11px;
    flex: 1;
}
.doodle {
    margin-right: 6px;
}
.task-icons {
    display: flex;
}
.task-app {
    width: 49px;
    display: flex;
    align-items: center;
    justify-content: center;
}
.task-on {
    background: #4a5c68;
    border-bottom: 3px solid #76b9ed;
}
.task-line {
    border-bottom: 3px solid #76b9ed;
}
.task-wide {
    width: 97px;
    gap: 12px;
    padding-left: 17px;
    justify-content: flex-start;
}
.word-w {
    fill: #fff;
    font-family: "Liberation Sans", sans-serif;
    font-size: 10px;
    font-weight: bold;
    text-anchor: middle;
}
.tray {
    flex: 1;
    display: flex;
    align-items: center;
    padding-left: 4px;
}
.tray-item {
    width: 32.500px;
    display: flex;
    justify-content: center;
}
.tray-vol {
    width: 28px;
}
.tray-pen {
    width: 33px;
}
.clock {
    width: 74px;
    display: flex;
    flex-direction: column;
    align-items: center;
    padding-top: 1px;
    font-size: 11.800px;
    line-height: 19px;
}
.notify {
    position: relative;
    width: 34px;
    display: flex;
    justify-content: center;
}
.notify-badge {
    position: absolute;
    right: 1px;
    bottom: -7px;
    width: 17px;
    height: 17px;
    border-radius: 50%;
    background: #333;
    border: 1px solid #aaa;
    font-size: 11px;
    line-height: 15px;
    text-align: center;
}
```
